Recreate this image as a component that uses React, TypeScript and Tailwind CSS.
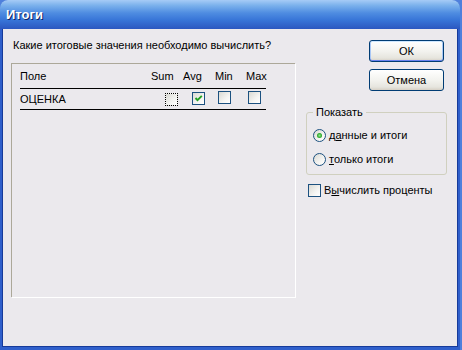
import React from "react";

const ui = "font-['Tahoma','Liberation_Sans',sans-serif] text-[11px] leading-[13px] text-black";

function CheckBox({ checked, focus }: { checked?: boolean; focus?: boolean }) {
  return (
    <span
      className={`inline-flex h-[13px] w-[13px] shrink-0 items-center justify-center border bg-[linear-gradient(135deg,#d9d9d3_0%,#f4f4f2_60%,#ffffff_100%)] ${
        focus ? "border-dotted border-[#000]" : "border-[#1c5180]"
      }`}
    >
      {checked && (
        <svg width="9" height="9" viewBox="0 0 9 9">
          <path d="M1.5 4 L3.5 6.2 L7.8 1.8" stroke="#21a121" strokeWidth="1.9" fill="none" />
        </svg>
      )}
    </span>
  );
}

function Radio({ on }: { on?: boolean }) {
  return (
    <span className="inline-flex h-[13px] w-[13px] shrink-0 items-center justify-center rounded-full border border-[#1c5180] bg-[linear-gradient(135deg,#d9d9d3_0%,#f4f4f2_60%,#ffffff_100%)]">
      {on && <span className="h-[5px] w-[5px] rounded-full bg-[radial-gradient(circle,#8ee68e_0%,#21a121_70%)]" />}
    </span>
  );
}

function XPButton({ label, isDefault }: { label: string; isDefault?: boolean }) {
  return (
    <button
      className={`flex h-[22px] w-[75px] items-center justify-center rounded-[3px] border border-[#003c74] bg-[linear-gradient(to_bottom,#ffffff_0%,#f3f3ef_50%,#e6e5de_85%,#d6d0c5_100%)] ${
        isDefault ? "shadow-[inset_0_1px_0_#cee7ff,inset_0_-1px_0_#6982ee,inset_1px_0_0_#a9c7f5,inset_-1px_0_0_#a9c7f5]" : ""
      } ${ui}`}
    >
      {label}
    </button>
  );
}

export default function App() {
  return (
    <div className="h-[350px] w-[462px] overflow-hidden bg-[#4f80dc]">
      <div className="flex h-[350px] w-[460px] flex-col rounded-t-[8px] bg-[#2f5fcb] px-[2px] pb-[3px]">
        {/* title bar */}
        <div className="-mx-[2px] flex h-[29px] shrink-0 items-center rounded-t-[8px] bg-[linear-gradient(to_bottom,#a6cbf6_0%,#7cb2ec_18%,#4e8ce1_45%,#3774d7_70%,#2b57c0_100%)] pl-[6px]">
          <span className="font-['Liberation_Sans',sans-serif] text-[13px] font-bold text-white [text-shadow:1px_1px_0_#0a246a]">
            Итоги
          </span>
        </div>

        {/* client area */}
        <div className={`flex flex-1 border border-t-0 border-[#163a9a] bg-[#ebe9ed] ${ui}`}>
          {/* left column */}
          <div className="flex flex-col pl-[8px] pt-[10px]">
            <div className="ml-[2px] h-[14px]">Какие итоговые значения необходимо вычислить?</div>
            <div className="mt-[10px] h-[234px] w-[284px] border-l border-t border-[#aca899] shadow-[1px_1px_0_#ffffff] pl-[8px]">
              <div className="flex h-[25px] w-[246px] items-center border-b border-black">
                <div className="w-[131px] shrink-0">Поле</div>
                <div className="w-[32px] shrink-0">Sum</div>
                <div className="w-[32px] shrink-0">Avg</div>
                <div className="w-[31px] shrink-0">Min</div>
                <div className="shrink-0">Max</div>
              </div>
              <div className="flex h-[21px] w-[246px] items-center border-b border-black">
                <div className="w-[145px] shrink-0">ОЦЕНКА</div>
                <CheckBox focus />
                <span className="ml-[14px]">
                  <CheckBox checked />
                </span>
                <span className="ml-[13px]">
                  <CheckBox />
                </span>
                <span className="ml-[17px]">
                  <CheckBox />
                </span>
              </div>
            </div>
          </div>

          {/* right column */}
          <div className="ml-[11px] flex w-[141px] flex-col pt-[11px]">
            <div className="ml-[63px] flex flex-col gap-[7px]">
              <XPButton label="ОК" isDefault />
              <XPButton label="Отмена" />
            </div>
            <fieldset className="mt-[15px] h-[69px] rounded-[3px] border border-[#d0d0bf] pl-[6px] pr-[8px]">
              <legend className="px-[3px]">Показать</legend>
              <div className="ml-0 mt-[4px] flex h-[24px] items-center gap-[3px]">
                <Radio on />
                <span>
                  д<u>а</u>нные и итоги
                </span>
              </div>
              <div className="ml-0 flex h-[24px] items-center gap-[3px]">
                <Radio />
                <span>
                  <u>т</u>олько итоги
                </span>
              </div>
            </fieldset>
            <div className="ml-[2px] mt-[8px] flex h-[15px] items-center gap-[3px]">
              <CheckBox />
              <span>
                В<u>ы</u>числить проценты
              </span>
            </div>
          </div>
        </div>
      </div>
    </div>
  );
}
